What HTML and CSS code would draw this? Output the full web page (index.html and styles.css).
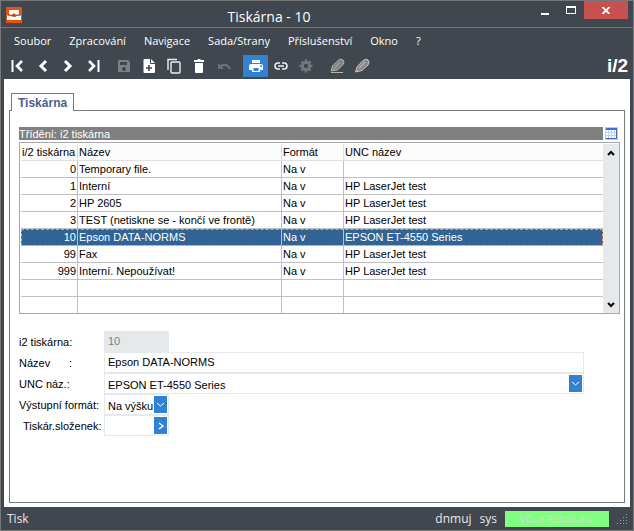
FILE: index.html
```html
<!DOCTYPE html>
<html lang="cs">
<head>
  <meta charset="UTF-8">
  <title>Tiskárna - 10</title>
  <link rel="stylesheet" href="styles.css">
</head>
<body>
  <div class="window">

    <!-- TITLE BAR -->
    <header class="titlebar">
      <svg class="app-icon" width="16" height="16" viewBox="0 0 16 16">
        <rect width="16" height="16" fill="#e8500f"/>
        <path d="M3 3h10v5h-3l-1-1.500H7L6 8H3z" fill="#fff"/>
        <path d="M1 8.500h4l1 1h4l1-1h4V13H1z" fill="#fff"/>
        <path d="M2 8h3l1.500 1h3L11 8h3" stroke="#8c3a1a" fill="none"/>
      </svg>
      <h1 class="title">Tiskárna - 10</h1>
      <div class="window-buttons">
        <button type="button" aria-label="Minimalizovat">
          <svg width="10" height="10" viewBox="0 0 10 10"><path d="M1 8h8v2H1z" fill="#fff"/></svg>
        </button>
        <button type="button" aria-label="Maximalizovat">
          <svg width="10" height="8" viewBox="0 0 10 8"><path d="M0 0h10v8H0zM1 2v5h8V2z" fill="#fff" fill-rule="evenodd"/></svg>
        </button>
        <button type="button" class="close" aria-label="Zavřít">
          <svg width="8" height="7" viewBox="0 0 8 7"><path d="M.5 0l7 7M7.500 0l-7 7" stroke="#fff" stroke-width="1.800"/></svg>
        </button>
      </div>
    </header>

    <!-- MENU -->
    <nav class="menu">
      <a href="#">Soubor</a>
      <a href="#">Zpracování</a>
      <a href="#">Navigace</a>
      <a href="#">Sada/Strany</a>
      <a href="#">Příslušenství</a>
      <a href="#">Okno</a>
      <a href="#">?</a>
    </nav>

    <!-- TOOLBAR -->
    <div class="toolbar">
      <div class="tools">
        <button type="button" aria-label="První">
          <svg width="16" height="16" viewBox="0 0 16 16" fill="none" stroke="#fff" stroke-width="2.600"><path d="M3.500 2v12" stroke-width="2"/><path d="M13 3L8 8l5 5"/></svg>
        </button>
        <button type="button" aria-label="Předchozí">
          <svg width="16" height="16" viewBox="0 0 16 16" fill="none" stroke="#fff" stroke-width="3"><path d="M12 3L7 8l5 5"/></svg>
        </button>
        <button type="button" aria-label="Další">
          <svg width="16" height="16" viewBox="0 0 16 16" fill="none" stroke="#fff" stroke-width="3"><path d="M6 3l5 5-5 5"/></svg>
        </button>
        <button type="button" aria-label="Poslední">
          <svg width="16" height="16" viewBox="0 0 16 16" fill="none" stroke="#fff" stroke-width="2.600"><path d="M5 3l5 5-5 5"/><path d="M14.500 2v12" stroke-width="2"/></svg>
        </button>
      </div>
      <div class="tools">
        <button type="button" aria-label="Uložit">
          <svg width="16" height="16" viewBox="0 0 16 16"><path d="M3 2h9l2 2v9a1 1 0 0 1-1 1H3a1 1 0 0 1-1-1V3a1 1 0 0 1 1-1zM4 4v3h7V4zM8 9a2 2 0 1 0 .01 0z" fill="#808080" fill-rule="evenodd"/></svg>
        </button>
        <button type="button" aria-label="Nový">
          <svg width="16" height="16" viewBox="0 0 16 16"><path d="M3.500 1H10l4 4v9a1 1 0 0 1-1 1H3.500a1 1 0 0 1-1-1V2a1 1 0 0 1 1-1z" fill="#fff"/><path d="M9.500 1v4.500H14" stroke="#41474e" fill="none"/><path d="M8 7v6M5 10h6" stroke="#41474e" stroke-width="1.600"/></svg>
        </button>
        <button type="button" aria-label="Kopírovat">
          <svg width="16" height="16" viewBox="0 0 16 16" fill="none" stroke="#eee" stroke-width="1.400"><path d="M2 12V1.500h9"/><rect x="5" y="4" width="9" height="11" rx="1"/></svg>
        </button>
        <button type="button" aria-label="Smazat">
          <svg width="16" height="16" viewBox="0 0 16 16" fill="#fff"><path d="M4 5h8v9a1 1 0 0 1-1 1H5a1 1 0 0 1-1-1zM3 2h3l1-1h2l1 1h3v2H3z"/></svg>
        </button>
        <button type="button" aria-label="Zpět">
          <svg width="16" height="16" viewBox="0 0 16 16"><path d="M2 5v6h6L5.800 8.800c3-1.800 5.700-.8 7.200 2.700l2-.8C13 5.500 8 4.300 4.200 7.200z" fill="#6f7377"/></svg>
        </button>
      </div>
      <div class="tools">
        <button type="button" class="active" aria-label="Tisk">
          <svg width="16" height="16" viewBox="0 0 16 16"><path d="M4 2h8v3H4zM3 6h10a2 2 0 0 1 2 2v4h-3v2H4v-2H1V8a2 2 0 0 1 2-2z" fill="#fff"/><path d="M5.500 10h5v3h-5z" fill="#3182d3"/><circle cx="13" cy="8" r="1" fill="#3182d3"/></svg>
        </button>
        <button type="button" aria-label="Odkaz">
          <svg width="16" height="16" viewBox="0 0 16 16" fill="none" stroke="#eee" stroke-width="1.600"><path d="M7 5H5a3 3 0 0 0 0 6h2M9 5h2a3 3 0 0 1 0 6H9M5 8h6"/></svg>
        </button>
        <button type="button" aria-label="Nastavení">
          <svg width="16" height="16" viewBox="0 0 16 16" fill="none" stroke="#75797c"><circle cx="8" cy="8" r="3.500" stroke-width="2.600"/><path d="M8 1.500V4M8 12v2.500M1.500 8H4M12 8h2.500M3.500 3.500l1.700 1.700M10.800 10.800l1.700 1.700M3.500 12.500l1.700-1.700M10.800 5.200l1.700-1.700" stroke-width="2.600"/></svg>
        </button>
      </div>
      <div class="tools">
        <button type="button" aria-label="Upravit">
          <svg width="16" height="16" viewBox="0 0 16 16" fill="#85817f" stroke="#b4b4b4"><path d="M1 13l1.500-5L8 2.500Q11 0 13 2t0 4.500L7.500 12z"/><path d="M3.500 11.500l6-7" fill="none"/><path d="M1 14.500h12"/></svg>
        </button>
        <button type="button" aria-label="Poznámka">
          <svg width="16" height="16" viewBox="0 0 16 16" fill="#8c8886" stroke="#c8c8c8"><path d="M.5 14L2 9l5.500-6Q11 0 13 2t0 5l-6 5.500z"/><path d="M4 10.500l6-6.500" fill="none"/></svg>
        </button>
      </div>
      <strong class="brand">i/2</strong>
    </div>

    <!-- CONTENT -->
    <main class="content">
      <div class="tabs">
        <button type="button" class="tab">Tiskárna</button>
      </div>
      <section class="panel">
        <div class="sort-row">
          <div class="sort-bar">Třídění: i2 tiskárna</div>
          <button type="button" class="columns-button" aria-label="Sloupce">
            <svg width="13" height="13" viewBox="0 0 13 13"><rect width="13" height="13" fill="#b9cbe3"/><rect x="1" y="1" width="11" height="10" fill="#fff"/><path d="M1 1h11v2H1z" fill="#3f6fe0"/><path d="M1 5.500h11M1 8.500h11M3.500 3v8M6.500 3v8M9.500 3v8" stroke="#c3d2ea"/><path d="M11.500 1v10.500H1" fill="none" stroke="#4a6cae"/></svg>
          </button>
        </div>

        <div class="grid">
          <table>
            <colgroup>
              <col class="col-id">
              <col class="col-name">
              <col class="col-format">
              <col>
            </colgroup>
            <thead>
              <tr><th>i/2 tiskárna</th><th>Název</th><th>Formát</th><th>UNC název</th></tr>
            </thead>
            <tbody>
              <tr><td>0</td><td>Temporary file.</td><td>Na v</td><td></td></tr>
              <tr><td>1</td><td>Interní</td><td>Na v</td><td>HP LaserJet test</td></tr>
              <tr><td>2</td><td>HP 2605</td><td>Na v</td><td>HP LaserJet test</td></tr>
              <tr><td>3</td><td>TEST (netiskne se - končí ve frontě)</td><td>Na v</td><td>HP LaserJet test</td></tr>
              <tr class="selected"><td>10</td><td>Epson DATA-NORMS</td><td>Na v</td><td>EPSON ET-4550 Series</td></tr>
              <tr><td>99</td><td>Fax</td><td>Na v</td><td>HP LaserJet test</td></tr>
              <tr><td>999</td><td>Interní. Nepoužívat!</td><td>Na v</td><td>HP LaserJet test</td></tr>
              <tr><td></td><td></td><td></td><td></td></tr>
              <tr><td></td><td></td><td></td><td></td></tr>
            </tbody>
          </table>
          <div class="scrollbar">
            <button type="button" aria-label="Nahoru">
              <svg width="8" height="6" viewBox="0 0 8 6"><path d="M1 5l3-3 3 3" fill="none" stroke="#000" stroke-width="2"/></svg>
            </button>
            <button type="button" aria-label="Dolů">
              <svg width="8" height="6" viewBox="0 0 8 6"><path d="M1 1l3 3 3-3" fill="none" stroke="#000" stroke-width="2"/></svg>
            </button>
          </div>
        </div>

        <!-- DETAIL -->
        <form class="detail">
          <label for="printer-id">i2 tiskárna:</label>
          <div class="field short disabled"><input id="printer-id" type="text" value="10" disabled></div>

          <label for="name" class="spread"><span>Název</span><span>:</span></label>
          <div class="field"><input id="name" type="text" value="Epson DATA-NORMS"></div>

          <label for="unc">UNC náz.:</label>
          <div class="field">
            <select id="unc"><option>EPSON ET-4550 Series</option></select>
            <span class="arrow"><svg width="7" height="5" viewBox="0 0 7 5"><path d="M0 1l3.500 3L7 1" fill="none" stroke="#fff"/></svg></span>
          </div>

          <label for="format">Výstupní formát:</label>
          <div class="field short">
            <select id="format"><option>Na výšku</option></select>
            <span class="arrow"><svg width="7" height="5" viewBox="0 0 7 5"><path d="M0 1l3.500 3L7 1" fill="none" stroke="#fff"/></svg></span>
          </div>

          <label for="slips" class="indent">Tiskár.složenek:</label>
          <div class="field short">
            <input id="slips" type="text">
            <button type="button" class="arrow" aria-label="Vybrat"><svg width="6" height="8" viewBox="0 0 6 8"><path d="M1 1l4 3-4 3" fill="none" stroke="#fff" stroke-width="1.400"/></svg></button>
          </div>
        </form>
      </section>
    </main>

    <!-- STATUS BAR -->
    <footer class="statusbar">
      <span class="status-text">Tisk</span>
      <span>dnmuj</span>
      <span>sys</span>
      <span class="company">VO a Retail a.s.</span>
      <svg class="grip" width="11" height="11" viewBox="0 0 11 11" fill="#9a9da0"><path d="M9 0h1v1H9zM6 3h1v1H6zM9 3h1v1H9zM3 6h1v1H3zM6 6h1v1H6zM9 6h1v1H9zM0 9h1v1H0zM3 9h1v1H3zM6 9h1v1H6zM9 9h1v1H9z"/></svg>
    </footer>
  </div>
</body>
</html>
```

FILE: styles.css
```css
/* ---------- BASE ---------- */
* {
  margin: 0;
  padding: 0;
  box-sizing: border-box;
}
body {
  font-family: "Liberation Sans", Arial, sans-serif;
  font-size: 11px;
  color: #000;
}
button,
input,
select {
  border: none;
  background: none;
  font: inherit;
  color: inherit;
}
a {
  color: inherit;
  text-decoration: none;
}
svg {
  display: block;
}

/* ---------- WINDOW ---------- */
.window {
  min-height: 100vh;
  display: flex;
  flex-direction: column;
  background: #41474e;
  border: 1px solid #77787a;
}

/* ---------- TITLE BAR ---------- */
.titlebar {
  display: flex;
  height: 27px;
  padding: 0 5px;
  border-bottom: 1px solid #77787a;
}
.app-icon {
  margin-top: 6px;
}
.title {
  flex: 1;
  padding-right: 16px;
  font-family: "Open Sans", "Segoe UI", sans-serif;
  font-size: 14px;
  font-weight: 400;
  line-height: 31px;
  text-align: center;
  color: #fff;
}
.window-buttons {
  display: flex;
  height: 18px;
}
.window-buttons button {
  width: 26px;
  display: flex;
  align-items: center;
  justify-content: center;
}
.window-buttons .close {
  width: 44px;
  background: #c75050;
}

/* ---------- MENU ---------- */
.menu {
  display: flex;
  gap: 18px;
  padding: 0 13px 1px;
  font-family: "Open Sans", "Segoe UI", sans-serif;
  line-height: 26px;
  color: #fff;
}

/* ---------- TOOLBAR ---------- */
.toolbar {
  display: flex;
  height: 24px;
  gap: 7px;
  padding: 0 5px 0 3px;
}
.tools {
  display: flex;
}
.tools button {
  width: 25px;
  height: 22px;
  display: flex;
  align-items: center;
  justify-content: center;
}
.tools .active {
  background: #3182d3;
}
.brand {
  margin-left: auto;
  font-size: 19px;
  line-height: 22px;
  color: #fff;
}

/* ---------- CONTENT ---------- */
.content {
  flex: 1;
  display: flex;
  flex-direction: column;
  margin: 0 3px;
  padding: 14px 5px 4px;
  background: #fff;
}
.tabs {
  padding-left: 2px;
}
.tab {
  position: relative;
  display: block;
  height: 18px;
  margin-bottom: -1px;
  padding: 0 6px;
  border: 1px solid #77787a;
  border-bottom: none;
  background: #fff;
  font-size: 12px;
  font-weight: 700;
  color: #4a5f8c;
}
.panel {
  flex: 1;
  padding: 16px 4px 16px 9px;
  border: 1px solid #77787a;
}

/* ---------- SORT BAR ---------- */
.sort-row {
  display: flex;
  gap: 2px;
  padding-right: 2px;
}
.sort-bar {
  flex: 1;
  height: 13px;
  line-height: 14px;
  background: #808080;
  color: #fff;
}

/* ---------- GRID ---------- */
.grid {
  display: flex;
  margin-top: 2px;
  padding: 1px 0 0 1px;
  border: 1px solid #a7a8ab;
}
table {
  flex: 1;
  width: 100%;
  table-layout: fixed;
  border-spacing: 0;
}
.col-id {
  width: 57px;
}
.col-name {
  width: 204px;
}
.col-format {
  width: 62px;
}
th,
td {
  height: 17px;
  padding: 0 1px;
  line-height: 16px;
  text-align: left;
  white-space: nowrap;
  border-right: 1px solid #c0c0c0;
  border-bottom: 1px solid #c0c0c0;
}
th {
  font-weight: 400;
  background: #fcfcfc;
  border-color: #e0e0e0;
}
th:last-child,
td:last-child {
  border-right: none;
}
td:first-child {
  text-align: right;
}
tbody tr:last-child td {
  height: 16px;
  border-bottom: none;
}
.selected {
  background: #316395;
  color: #fff;
  outline: 1px dashed #f0a04b;
  outline-offset: -1px;
}
.scrollbar {
  flex: none;
  width: 16px;
  display: flex;
  flex-direction: column;
  justify-content: space-between;
  background: #e5e9ec;
}
.scrollbar button {
  height: 17px;
  display: flex;
  align-items: center;
  justify-content: center;
}

/* ---------- DETAIL FORM ---------- */
.detail {
  display: grid;
  grid-template-columns: 85px 1fr;
  grid-auto-rows: 21px;
  margin-top: 17px;
  padding-right: 36px;
  line-height: 21px;
}
.detail label {
  padding: 1px 0 0;
  white-space: nowrap;
}
.detail .spread {
  display: flex;
  justify-content: space-between;
  padding-right: 32px;
}
.detail .indent {
  padding-left: 4px;
}
.field {
  display: flex;
  min-width: 0;
  padding: 1px;
  border: 1px solid #e5e9ec;
}
.field.short {
  width: 65px;
}
.field.disabled {
  background: #e5e9ec;
  color: #808080;
}
.field input,
.field select {
  flex: 1;
  min-width: 0;
  padding-left: 2px;
  appearance: none;
  outline: none;
}
.arrow {
  flex: none;
  width: 13px;
  display: flex;
  align-items: center;
  justify-content: center;
  background: #3182d3;
}

/* ---------- STATUS BAR ---------- */
.statusbar {
  display: flex;
  align-items: center;
  gap: 8px;
  height: 23px;
  padding: 0 5px 0 6px;
  font-family: "Open Sans", "Segoe UI", sans-serif;
  font-size: 12px;
  color: #e8e8e8;
}
.status-text {
  flex: 1;
}
.company {
  width: 104px;
  line-height: 16px;
  font-size: 11px;
  text-align: center;
  background: #80ff80;
  color: #d4d8d8;
}
.grip {
  align-self: flex-end;
  margin-bottom: 5px;
}
```
